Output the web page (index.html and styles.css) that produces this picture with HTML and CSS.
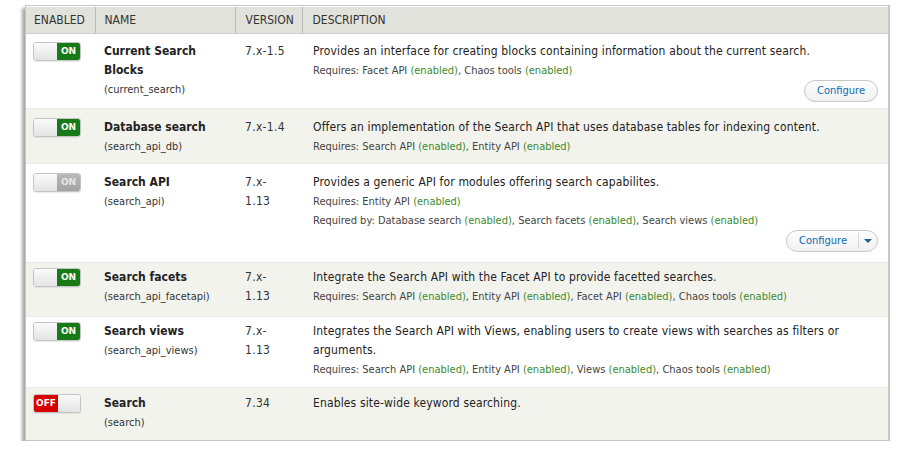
FILE: index.html
```html
<!DOCTYPE html>
<html>
<head>
<meta charset="utf-8">
<link rel="stylesheet" href="styles.css">
</head>
<body>
<div class="frame">
<table class="modules">
<thead>
<tr><th class="c-en">Enabled</th><th class="c-name">Name</th><th class="c-ver">Version</th><th class="c-desc">Description</th></tr>
</thead>
<tbody>
<tr class="odd r1">
<td><span class="tog on"><span class="knob"></span><span class="lab">ON</span></span></td>
<td><div class="nm">Current Search Blocks</div><div class="mach">(current_search)</div></td>
<td class="ver">7.x-1.5</td>
<td class="desc"><div class="d">Provides an interface for creating blocks containing information about the current search.</div>
<div class="req">Requires: Facet API <span class="ok">(enabled)</span>, Chaos tools <span class="ok">(enabled)</span></div>
<div class="ops"><span class="btn">Configure</span></div></td>
</tr>
<tr class="even r2">
<td><span class="tog on"><span class="knob"></span><span class="lab">ON</span></span></td>
<td><div class="nm">Database search</div><div class="mach">(search_api_db)</div></td>
<td class="ver">7.x-1.4</td>
<td class="desc"><div class="d">Offers an implementation of the Search API that uses database tables for indexing content.</div>
<div class="req">Requires: Search API <span class="ok">(enabled)</span>, Entity API <span class="ok">(enabled)</span></div></td>
</tr>
<tr class="odd r3">
<td><span class="tog dis"><span class="knob"></span><span class="lab">ON</span></span></td>
<td><div class="nm">Search API</div><div class="mach">(search_api)</div></td>
<td class="ver">7.x-<br>1.13</td>
<td class="desc"><div class="d">Provides a generic API for modules offering search capabilites.</div>
<div class="req">Requires: Entity API <span class="ok">(enabled)</span></div>
<div class="req">Required by: Database search <span class="ok">(enabled)</span>, Search facets <span class="ok">(enabled)</span>, Search views <span class="ok">(enabled)</span></div>
<div class="ops"><span class="btn split"><span class="main">Configure</span><span class="caret"></span></span></div></td>
</tr>
<tr class="even r4">
<td><span class="tog on"><span class="knob"></span><span class="lab">ON</span></span></td>
<td><div class="nm">Search facets</div><div class="mach">(search_api_facetapi)</div></td>
<td class="ver">7.x-<br>1.13</td>
<td class="desc"><div class="d">Integrate the Search API with the Facet API to provide facetted searches.</div>
<div class="req">Requires: Search API <span class="ok">(enabled)</span>, Entity API <span class="ok">(enabled)</span>, Facet API <span class="ok">(enabled)</span>, Chaos tools <span class="ok">(enabled)</span></div></td>
</tr>
<tr class="odd r5">
<td><span class="tog on"><span class="knob"></span><span class="lab">ON</span></span></td>
<td><div class="nm">Search views</div><div class="mach">(search_api_views)</div></td>
<td class="ver">7.x-<br>1.13</td>
<td class="desc"><div class="d">Integrates the Search API with Views, enabling users to create views with searches as filters or arguments.</div>
<div class="req">Requires: Search API <span class="ok">(enabled)</span>, Entity API <span class="ok">(enabled)</span>, Views <span class="ok">(enabled)</span>, Chaos tools <span class="ok">(enabled)</span></div></td>
</tr>
<tr class="even r6">
<td><span class="tog off"><span class="lab">OFF</span><span class="knob"></span></span></td>
<td><div class="nm">Search</div><div class="mach">(search)</div></td>
<td class="ver">7.34</td>
<td class="desc"><div class="d">Enables site-wide keyword searching.</div></td>
</tr>
</tbody>
</table>
</div>
</body>
</html>
```
FILE: styles.css
```css
html, body {
  margin: 0;
  padding: 0;
  background: #fff;
}
body {
  font-family: "DejaVu Sans Condensed", "DejaVu Sans", sans-serif;
  color: #222;
  font-size: 12px;
}
.frame {
  margin: 5px 0 0 25px;
  width: 862px;
  border: 1px solid #c6c6c6;
  border-right: 2px solid #c6c6c6;
  box-shadow: -3px 3px 3px rgba(0,0,0,0.35);
  background: #fff;
  padding-top: 1px;
}
.modules {
  width: 100%;
  border-collapse: collapse;
  table-layout: fixed;
}
.modules th {
  box-sizing: border-box;
  background: #e1e2dc;
  text-transform: uppercase;
  font-weight: normal;
  text-align: left;
  font-size: 12px;
  color: #333;
  height: 26px;
  padding: 0 9px 0 10px;
  border-left: 1px solid #bebeb8;
  border-bottom: 1px solid #cfcfc9;
}
.modules th:first-child { border-left: none; padding-left: 8px; }
.modules th.c-name { padding-left: 9px; }
.c-en { width: 69px; }
.c-name { width: 140px; }
.c-ver { width: 67px; }
.modules td {
  vertical-align: top;
  padding: 8px 9px 7px 10px;
  line-height: 19px;
  border-bottom: 1px solid #ebebe6;
}
.modules td:first-child { padding-left: 7px; }
.modules td:nth-child(2) { padding-left: 9px; }
.modules td.desc { padding-left: 11px; }
tr.even td { background: #f3f3ee; }
tr.r1 td { padding-top: 8px; padding-bottom: 6px; }
tr.r2 td { padding-top: 9px; padding-bottom: 7px; }
tr.r3 td { padding-top: 9px; padding-bottom: 10px; }
tr.r4 td { padding-top: 5px; padding-bottom: 10px; }
tr.r5 td { padding-top: 5px; padding-bottom: 8px; }
tr.r6 td { padding-top: 6px; padding-bottom: 8px; border-bottom: none; }
.d { letter-spacing: 0.14px; }
.nm { font-weight: bold; }
.mach, .req { font-size: 11px; }
.mach { color: #333; }
.req { color: #444; }
.ver { color: #333; letter-spacing: 0.3px; }
.ok { color: #3b8a2a; }
.ops {
  display: flex;
  justify-content: flex-end;
  margin-right: 1px;
}
.btn {
  display: inline-flex;
  align-items: center;
  height: 20px;
  border: 1px solid #c8c8c8;
  border-radius: 11px;
  background: linear-gradient(#fdfdfd, #f1f1f1);
  color: #0a6ab3;
  font-size: 11px;
  padding: 0 12px;
  line-height: 20px;
}
.btn.split { padding: 0; }
.btn.split .main {
  padding: 0 11px 0 12px;
  border-right: 1px solid #d6d6d6;
  line-height: 15px;
}
.btn.split .caret {
  width: 18px;
  height: 20px;
  display: flex;
  align-items: center;
  justify-content: center;
}
.btn.split .caret::after {
  content: "";
  border-left: 4px solid transparent;
  border-right: 4px solid transparent;
  border-top: 4px solid #1f5f9a;
}
.tog {
  display: inline-flex;
  width: 46px;
  height: 17px;
  border: 1px solid #c4c4c4;
  border-radius: 3px;
  overflow: hidden;
  vertical-align: top;
  box-shadow: 0 1px 1px rgba(0,0,0,0.08);
}
.tog .knob {
  flex: 1;
  background: linear-gradient(#fafafa, #e4e4e4);
}
.tog .lab {
  width: 23px;
  font-family: "DejaVu Sans", sans-serif;
  font-weight: bold;
  font-size: 9px;
  line-height: 17px;
  text-align: center;
  color: #fff;
}
.tog.on .lab { background: #177a17; }
.tog.dis .lab { background: linear-gradient(#b9b9b9, #a3a3a3); color: #e6e6e6; }
.tog.off .lab { background: #d90000; width: 24px; }
```
